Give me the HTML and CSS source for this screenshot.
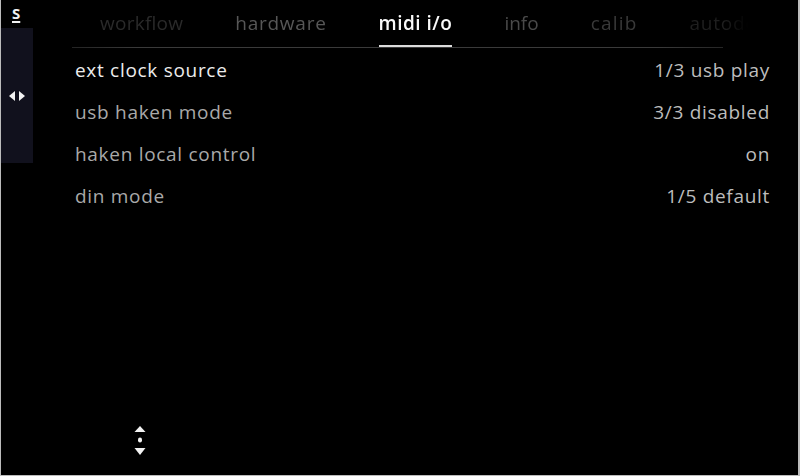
FILE: index.html
```html
<!DOCTYPE html>
<html>
<head>
<meta charset="utf-8">
<link rel="stylesheet" href="styles.css">
</head>
<body>
<div class="screen">
  <aside class="sidebar">
    <div class="logo">S</div>
    <div class="panel">
      <svg class="lr" width="16" height="10" viewBox="0 0 16 10">
        <path d="M6 0 L0 5 L6 10 Z" fill="#f2f2f2"/>
        <path d="M10 0 L16 5 L10 10 Z" fill="#f2f2f2"/>
      </svg>
    </div>
  </aside>
  <main class="main">
    <nav class="tabs">
      <span class="tab t1">workflow</span>
      <span class="tab t2">hardware</span>
      <span class="tab active">midi i/o</span>
      <span class="tab t4">info</span>
      <span class="tab t5">calib</span>
      <span class="tab t6">autodetect</span>
    </nav>
    <div class="sep"></div>
    <div class="rows">
      <div class="row sel"><span>ext clock source</span><span class="val">1/3 usb play</span></div>
      <div class="row"><span>usb haken mode</span><span class="val">3/3 disabled</span></div>
      <div class="row"><span>haken local control</span><span class="val">on</span></div>
      <div class="row"><span>din mode</span><span class="val">1/5 default</span></div>
    </div>
    <div class="scroll">
      <svg width="12" height="30" viewBox="0 0 12 30">
        <path d="M6 0 L11.5 6 L0.5 6 Z" fill="#f2f2f2"/>
        <rect x="4" y="11.5" width="4" height="5" rx="2" fill="#f2f2f2"/>
        <path d="M0.5 22 L11.5 22 L6 29 Z" fill="#f2f2f2"/>
      </svg>
    </div>
  </main>
</div>
</body>
</html>
```
FILE: styles.css
```css
html, body {
  margin: 0;
  padding: 0;
  background: #000;
}
.screen {
  width: 800px;
  height: 476px;
  box-sizing: border-box;
  border-left: 1px solid #bcbcbc;
  border-right: 2px solid #bcbcbc;
  border-bottom: 1px solid #bcbcbc;
  background: #000;
  display: flex;
  font-family: "Open Sans", "Liberation Sans", sans-serif;
  overflow: hidden;
}
.sidebar {
  width: 32px;
  flex: none;
  display: flex;
  flex-direction: column;
}
.logo {
  height: 28px;
  color: #f0f0f0;
  font-weight: 700;
  font-size: 15px;
  text-decoration: underline;
  text-underline-offset: 2px;
  text-decoration-thickness: 2px;
  padding-left: 11px;
  line-height: 26px;
  box-sizing: border-box;
}
.panel {
  height: 135px;
  background: #11111d;
  display: flex;
  align-items: center;
  justify-content: center;
}
.main {
  flex: 1;
  display: flex;
  flex-direction: column;
}
.tabs {
  display: flex;
  gap: 52px;
  height: 47px;
  margin-left: 39px;
  width: 680px;
  box-sizing: border-box;
  padding-left: 28px;
  align-items: center;
  font-size: 19px;
  letter-spacing: 0.75px;
  white-space: nowrap;
  overflow: hidden;
  -webkit-mask-image: linear-gradient(to right, #000 0, #000 652px, transparent 676px);
  mask-image: linear-gradient(to right, #000 0, #000 652px, transparent 676px);
}
.tab {
  position: relative;
  height: 47px;
  line-height: 46px;
  flex: none;
}
.t1 { color: #2a2a2a; letter-spacing: 0.25px; }
.t2 { color: #575757; }
.t4 { color: #4a4a4a; letter-spacing: 0; }
.t5 { color: #393939; letter-spacing: 1.2px; }
.t6 { color: #1f1f1f; }
.active {
  color: #fafafa;
  font-weight: 600;
  letter-spacing: 0.5px;
}
.active::after {
  content: "";
  position: absolute;
  left: 0;
  right: 0;
  bottom: 0;
  height: 2px;
  background: #dcdcdc;
}
.sep {
  margin-left: 39px;
  width: 651px;
  height: 1px;
  background: linear-gradient(to right, #242424, #3a3a3a 10%, #3a3a3a 90%, #262626);
}
.rows {
  display: flex;
  flex-direction: column;
  padding-top: 1px;
  padding-left: 42px;
  padding-right: 28px;
}
.row {
  height: 42px;
  display: flex;
  justify-content: space-between;
  align-items: center;
  font-size: 19px;
  letter-spacing: 0.7px;
  color: #a9a9a9;
}
.row.sel { color: #ececec; }
.val { color: #bdbdbd; }
.scroll {
  margin-top: auto;
  margin-bottom: 19px;
  padding-left: 101px;
  line-height: 0;
}
```
